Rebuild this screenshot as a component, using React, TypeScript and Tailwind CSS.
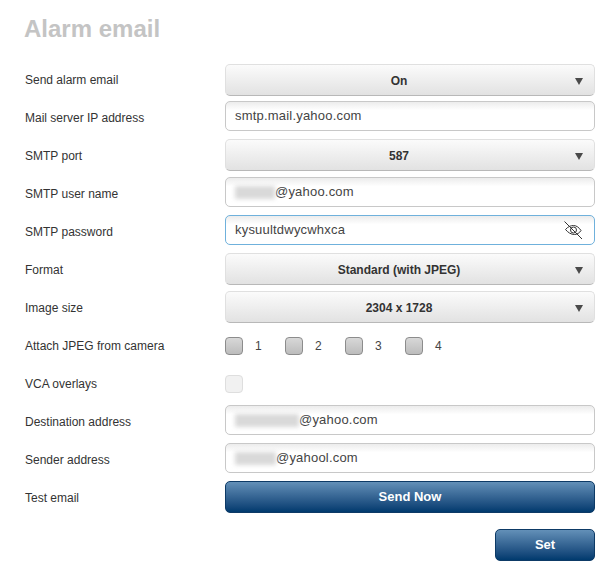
import React from 'react';

const Row = ({ label, children, contentClass = 'pt-[2px]' }: { label: string; children: React.ReactNode; contentClass?: string }) => (
  <div className="flex h-[38px] items-start">
    <label className="w-[200px] shrink-0 pt-[12px] text-[12px] leading-[14px] text-[#333]">{label}</label>
    <div className={`min-w-0 flex-1 ${contentClass}`}>{children}</div>
  </div>
);

const Select = ({ value }: { value: string }) => (
  <div className="relative flex h-[32px] items-center justify-center rounded-[5px] border border-[#e0e0e0] border-b-[#b8b8b8] bg-gradient-to-b from-[#fbfbfb] to-[#e2e2e2] pt-[2px] pr-[22px] text-[12px] font-bold text-[#333]">
    {value}
    <span className="absolute right-[11px] top-[13px] h-0 w-0 border-x-[4.5px] border-t-[7px] border-x-transparent border-t-[#4a4a4a]" />
  </div>
);

const Input = ({ value, blur, focused, icon }: { value: string; blur?: number; focused?: boolean; icon?: boolean }) => (
  <div
    className={`relative flex h-[30px] items-center rounded-[5px] border bg-white bg-gradient-to-b from-[#ececec] from-0% to-white to-30% pl-[9px] text-[13px] tracking-[0.2px] text-[#444] ${
      focused ? 'border-[#6fb1dc]' : 'border-[#c8c8c8]'
    }`}
  >
    {blur ? <BlurBlock width={blur} /> : null}
    {value}
    {icon ? <EyeOff /> : null}
  </div>
);

// the reference hides these parts of the addresses behind a blur
const BlurBlock = ({ width }: { width: number }) => (
  <span className="h-[13px] bg-[#d9d9d9] blur-[2px]" style={{ width }} />
);

const EyeOff = () => (
  <svg className="absolute right-[11px] top-[4px]" width="20" height="20" viewBox="0 0 20 20" fill="none" stroke="#333" strokeWidth="1">
    <path d="M2.5 9.5C5 6.5 8 5.5 10.5 5.5C13.5 5.5 16 7.5 18 10.5C16.5 13 14 14.5 11.5 14.5C8 14.5 5 12.5 2.5 9.5Z" />
    <circle cx="10.5" cy="10" r="3" />
    <path d="M1.5 1.5L19 19" />
  </svg>
);

const Check = ({ label }: { label: string }) => (
  <div className="flex w-[60px] items-center">
    <span className="h-[18px] w-[18px] rounded-[4px] border border-[#8c8c8c] bg-gradient-to-b from-[#d8d8d8] to-[#bcbcbc]" />
    <span className="ml-[12px] text-[12px] tracking-[0.2px] text-[#444]">{label}</span>
  </div>
);

const blueButton =
  'flex h-[32px] items-center justify-center rounded-[5px] border border-[#0d3a66] bg-gradient-to-b from-[#6390b8] to-[#003a6e] text-[13px] font-bold text-white';

export default function App() {
  return (
    <div className="h-[567px] w-[609px] overflow-hidden bg-white pl-[25px] pr-[14px] font-['Liberation_Sans',Arial,sans-serif]">
      <h1 className="-ml-px pt-[15px] text-[24px] font-bold leading-[28px] text-[#c4c4c4]">Alarm email</h1>
      <div className="mt-[18px]">
        <Row label="Send alarm email" contentClass="pt-[3px]">
          <Select value="On" />
        </Row>
        <Row label="Mail server IP address">
          <Input value="smtp.mail.yahoo.com" />
        </Row>
        <Row label="SMTP port">
          <Select value="587" />
        </Row>
        <Row label="SMTP user name">
          <Input value="@yahoo.com" blur={40} />
        </Row>
        <Row label="SMTP password">
          <Input value="kysuultdwycwhxca" focused icon />
        </Row>
        <Row label="Format">
          <Select value="Standard (with JPEG)" />
        </Row>
        <Row label="Image size">
          <Select value="2304 x 1728" />
        </Row>
        <Row label="Attach JPEG from camera">
          <div className="flex pt-[8px]">
            <Check label="1" />
            <Check label="2" />
            <Check label="3" />
            <Check label="4" />
          </div>
        </Row>
        <Row label="VCA overlays">
          <div className="pt-[8px]">
            <span className="block h-[18px] w-[18px] rounded-[4px] border border-[#dedede] bg-[#f1f1f1]" />
          </div>
        </Row>
        <Row label="Destination address">
          <Input value="@yahoo.com" blur={64} />
        </Row>
        <Row label="Sender address">
          <Input value="@yahool.com" blur={41} />
        </Row>
        <Row label="Test email">
          <div className={blueButton}>Send Now</div>
        </Row>
      </div>
      <div className="mt-[12px] flex justify-end">
        <div className={`${blueButton} w-[100px]`}>Set</div>
      </div>
    </div>
  );
}
